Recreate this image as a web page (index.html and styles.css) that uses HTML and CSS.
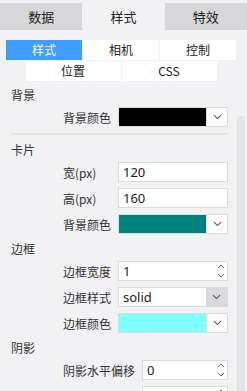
FILE: index.html
```html
<!DOCTYPE html>
<html lang="zh-CN">
<head>
    <meta charset="UTF-8">
    <meta name="viewport" content="width=device-width, initial-scale=1.0">
    <title>样式设置</title>
    <link rel="stylesheet" href="styles.css">
</head>
<body>

    <div class="tabs">
        <div class="tab">数据</div>
        <div class="tab active">样式</div>
        <div class="tab">特效</div>
    </div>

    <div class="panel">
        <div class="subtabs">
            <div class="subtab-row row-wide">
                <div class="subtab active">样式</div>
                <div class="subtab">相机</div>
                <div class="subtab">控制</div>
            </div>
            <div class="subtab-row row-narrow">
                <div class="subtab">位置</div>
                <div class="subtab">CSS</div>
            </div>
        </div>

        <div class="form">
            <div class="section-title first">背景</div>
            <div class="field">
                <label>背景颜色</label>
                <div class="color-field">
                    <span class="swatch swatch-black"></span>
                    <span class="drop"><svg width="9" height="6" viewBox="0 0 9 6"><path d="M1 1.2 L4.5 4.6 L8 1.2" fill="none" stroke="#555" stroke-width="1.1"/></svg></span>
                </div>
            </div>

            <div class="divider"></div>

            <div class="section-title">卡片</div>
            <div class="field">
                <label>宽(px)</label>
                <div class="text-field">120</div>
            </div>
            <div class="field">
                <label>高(px)</label>
                <div class="text-field">160</div>
            </div>
            <div class="field">
                <label>背景颜色</label>
                <div class="color-field">
                    <span class="swatch swatch-teal"></span>
                    <span class="drop"><svg width="9" height="6" viewBox="0 0 9 6"><path d="M1 1.2 L4.5 4.6 L8 1.2" fill="none" stroke="#555" stroke-width="1.1"/></svg></span>
                </div>
            </div>

            <div class="section-title">边框</div>
            <div class="field">
                <label>边框宽度</label>
                <div class="text-field number">
                    <span class="value">1</span>
                    <span class="spin"><svg width="8" height="16" viewBox="0 0 8 16"><path d="M1 5 L4 2 L7 5" fill="none" stroke="#666" stroke-width="1"/><path d="M1 11 L4 14 L7 11" fill="none" stroke="#666" stroke-width="1"/></svg></span>
                </div>
            </div>
            <div class="field">
                <label>边框样式</label>
                <div class="select-field">
                    <span class="value">solid</span>
                    <span class="select-arrow"><svg width="9" height="6" viewBox="0 0 9 6"><path d="M1 1.2 L4.5 4.6 L8 1.2" fill="none" stroke="#555" stroke-width="1.1"/></svg></span>
                </div>
            </div>
            <div class="field">
                <label>边框颜色</label>
                <div class="color-field">
                    <span class="swatch swatch-cyan"></span>
                    <span class="drop"><svg width="9" height="6" viewBox="0 0 9 6"><path d="M1 1.2 L4.5 4.6 L8 1.2" fill="none" stroke="#555" stroke-width="1.1"/></svg></span>
                </div>
            </div>

            <div class="section-title">阴影</div>
            <div class="field">
                <label>阴影水平偏移</label>
                <div class="text-field number">
                    <span class="value">0</span>
                    <span class="spin"><svg width="8" height="16" viewBox="0 0 8 16"><path d="M1 5 L4 2 L7 5" fill="none" stroke="#666" stroke-width="1"/><path d="M1 11 L4 14 L7 11" fill="none" stroke="#666" stroke-width="1"/></svg></span>
                </div>
            </div>
            <div class="field">
                <label>阴影垂直偏移</label>
                <div class="text-field number">
                    <span class="value">0</span>
                    <span class="spin"><svg width="8" height="16" viewBox="0 0 8 16"><path d="M1 5 L4 2 L7 5" fill="none" stroke="#666" stroke-width="1"/><path d="M1 11 L4 14 L7 11" fill="none" stroke="#666" stroke-width="1"/></svg></span>
                </div>
            </div>
        </div>

        <div class="scroll-thumb"></div>
    </div>

</body>
</html>
```

FILE: styles.css
```css
body {
    margin: 0;
    padding: 0;
    background-color: #f2f2f5;
    font-family: "Noto Sans CJK SC", "Noto Sans", sans-serif;
    color: #333;
    overflow: hidden;
    height: 391px;
}
.tabs {
    display: flex;
    margin-top: 3px;
    height: 27px;
}
.tab {
    flex: 1;
    background-color: #d7d7d9;
    font-size: 13px;
    line-height: 27px;
    text-align: center;
    color: #222;
}
.tab.active {
    background-color: #f2f2f5;
}
.panel {
    position: relative;
    width: 242px;
    padding-top: 10px;
}
.subtabs {
    display: flex;
    flex-direction: column;
    align-items: center;
    gap: 1px;
}
.subtab-row {
    display: flex;
    gap: 1px;
    height: 20px;
}
.row-wide {
    width: 230px;
}
.row-narrow {
    width: 191px;
}
.subtab {
    flex: 1;
    background-color: #fff;
    font-size: 12px;
    line-height: 20px;
    text-align: center;
    color: #222;
}
.subtab.active {
    background-color: #409eff;
    color: #fff;
}
.form {
    padding: 0 14px 0 11px;
}
.section-title {
    margin-top: 5px;
    height: 20px;
    line-height: 20px;
    font-size: 12px;
    color: #333;
}
.section-title.first {
    margin-top: 4px;
}
.field {
    display: flex;
    align-items: center;
    height: 20px;
    margin-top: 6px;
    padding-left: 52px;
}
.section-title + .field {
    margin-top: 2px;
}
.field label {
    min-width: 48px;
    margin-right: 7px;
    font-size: 12px;
    color: #333;
    white-space: nowrap;
}
.text-field,
.select-field,
.color-field {
    flex: 1;
    box-sizing: border-box;
    height: 20px;
    border: 1px solid #dcdcdc;
    background-color: #fff;
    display: flex;
    align-items: center;
    font-family: "Noto Sans", sans-serif;
    font-size: 13px;
    color: #222;
}
.text-field {
    padding-left: 4px;
}
.text-field .value {
    flex: 1;
}
.spin {
    width: 12px;
    display: flex;
    justify-content: center;
    align-items: center;
}
.select-field {
    padding-left: 4px;
}
.select-field .value {
    flex: 1;
}
.select-arrow {
    width: 21px;
    align-self: stretch;
    background-color: #dadadc;
    display: flex;
    align-items: center;
    justify-content: center;
}
.color-field .swatch {
    flex: 1;
    align-self: stretch;
}
.swatch-black {
    background-color: #000;
}
.swatch-teal {
    background-color: #008080;
}
.swatch-cyan {
    background-color: #80ffff;
}
.drop {
    width: 20px;
    align-self: stretch;
    border-left: 1px solid #dcdcdc;
    display: flex;
    align-items: center;
    justify-content: center;
}
.divider {
    margin-top: 6px;
    height: 2px;
    background-color: #e8e6da;
}
.scroll-thumb {
    position: absolute;
    left: 237px;
    top: 86px;
    width: 8px;
    height: 320px;
    border-radius: 4px;
    background-color: #e4e4e6;
}
```
